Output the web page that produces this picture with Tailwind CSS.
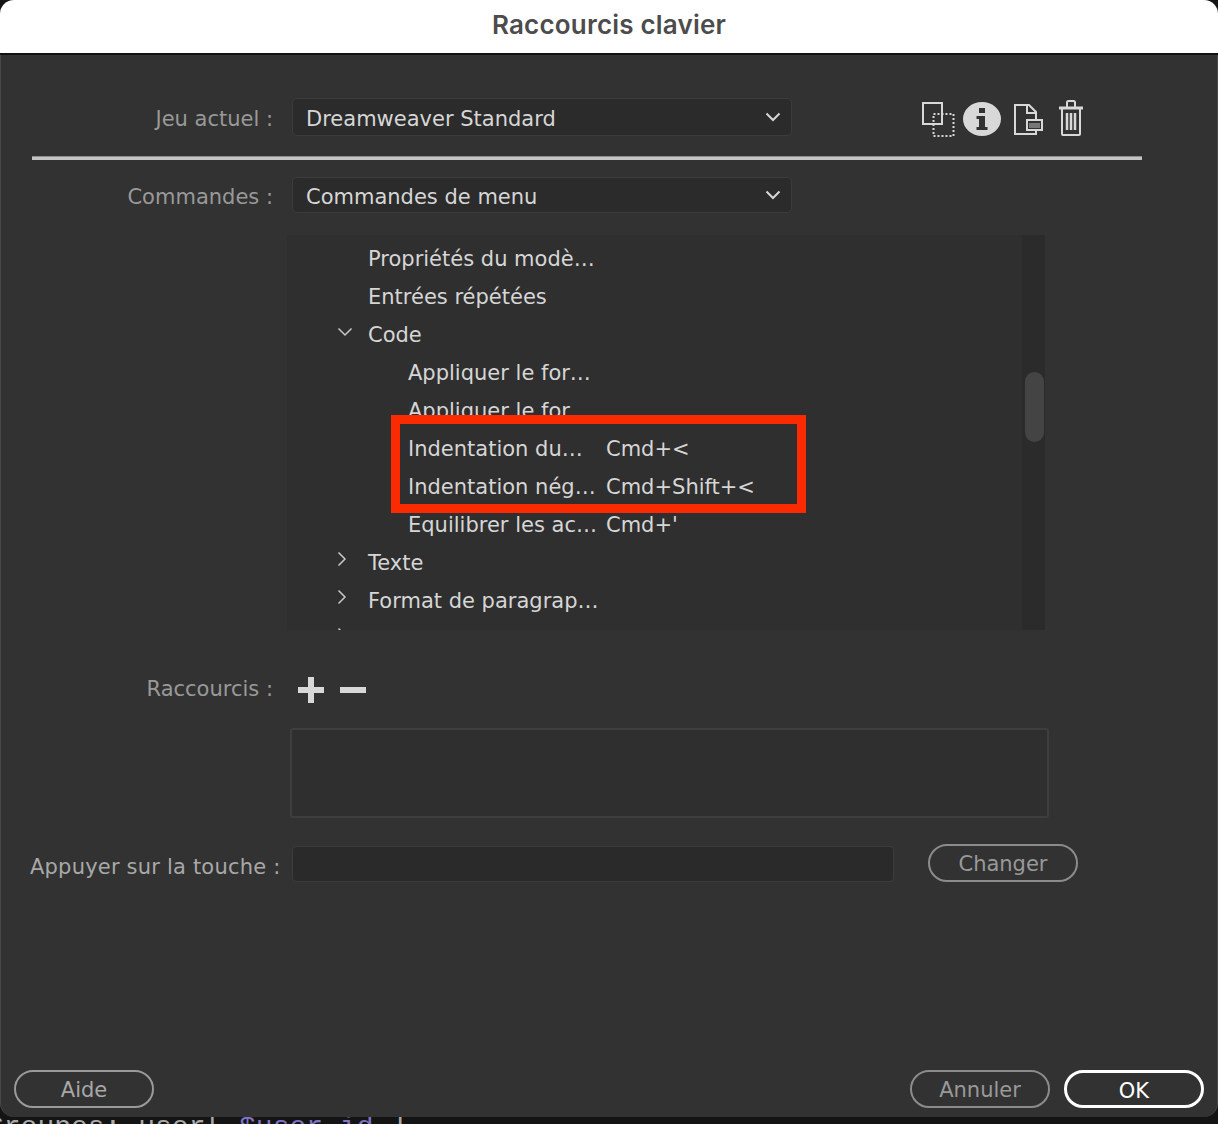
<!DOCTYPE html>
<html lang="fr">
<head>
    <meta charset="UTF-8">
    <title>Raccourcis clavier</title>
    <script src="https://cdn.jsdelivr.net/npm/@tailwindcss/browser@4"></script>
</head>
<body class="bg-[#141414] font-['DejaVu_Sans',sans-serif] text-[21px] text-[#d6d6d6] overflow-hidden">
<div class="w-[1218px] h-[1124px] flex flex-col overflow-hidden">
    <!-- Title bar -->
    <div class="h-[55px] shrink-0 bg-white rounded-t-[14px] border-b-2 border-[#111] flex items-center justify-center pb-[4px]">
        <h1 class="font-['Inter',sans-serif] font-semibold text-[26px] tracking-[0.2px] text-[#4c4c4c]">Raccourcis clavier</h1>
    </div>

    <!-- Dialog -->
    <div class="h-[1062px] shrink-0 bg-[#323232] rounded-b-[14px] border-l border-r border-[#484848] relative flex flex-col">
        <!-- Jeu actuel -->
        <div class="flex items-center mt-[43px] h-[38px]">
            <span class="w-[272px] text-right text-[#999] pt-[5px]">Jeu actuel :</span>
            <div class="ml-[19px] w-[500px] h-[38px] bg-[#2b2b2b] border border-[#3c3c3c] rounded-[5px] flex items-center justify-between pl-[13px] pr-[10px]">
                <span class="pt-[5px]">Dreamweaver Standard</span>
                <svg class="w-[16px] h-[10px]" viewBox="0 0 16 10" fill="none" stroke="#d6d6d6" stroke-width="2"><path d="M1.500 1.500 8 8l6.500-6.500"/></svg>
            </div>
            <div class="ml-[130px] flex items-start self-start">
                <svg class="w-[33px] h-[35px] mt-[4px]" viewBox="0 0 33 35" fill="none" stroke="#d8d8d8"><rect x="1" y="1" width="19" height="21" stroke-width="2"/><rect x="11.500" y="12" width="20" height="22" stroke-width="2" stroke-dasharray="2 2"/></svg>
                <svg class="w-[38px] h-[34px] ml-[8px] mt-[4px]" viewBox="0 0 38 34"><ellipse cx="19" cy="17" rx="19" ry="17" fill="#d8d8d8"/><path d="M16 6h6v5h-6zM13.500 14H22v11h2.500v3h-11v-3H16v-8h-2.500z" fill="#323232"/></svg>
                <svg class="w-[29px] h-[31px] ml-[13px] mt-[6px]" viewBox="0 0 29 31" fill="none" stroke="#d8d8d8" stroke-width="2"><path d="M22 16V8l-7-7H1v29h21v-4"/><path d="M13 1v8h9"/><rect x="13" y="16" width="15" height="10" fill="#323232"/><rect x="15" y="19" width="11" height="5" fill="#777" stroke="none"/></svg>
                <svg class="w-[24px] h-[36px] ml-[16px] mt-[2px]" viewBox="0 0 24 36" fill="none" stroke="#d8d8d8" stroke-width="2"><path d="M0 8h24" stroke-width="3"/><path d="M8 7V2.500a1.500 1.500 0 0 1 1.500-1.500h5A1.500 1.500 0 0 1 16 2.500V7"/><path d="M3 9v25a1 1 0 0 0 1 1h16a1 1 0 0 0 1-1V9"/><path d="M8 13v17M12 13v17M16 13v17" stroke-width="2.500"/></svg>
            </div>
        </div>

        <!-- Divider -->
        <div class="ml-[31px] w-[1110px] h-[4px] mt-[20px] bg-[#c4c4c4] border-t border-[#8e8e8e]"></div>

        <!-- Commandes -->
        <div class="flex items-center mt-[17px] h-[36px]">
            <span class="w-[272px] text-right text-[#999] pt-[5px]">Commandes :</span>
            <div class="ml-[19px] w-[500px] h-[36px] bg-[#2b2b2b] border border-[#3c3c3c] rounded-[5px] flex items-center justify-between pl-[13px] pr-[10px]">
                <span class="pt-[5px]">Commandes de menu</span>
                <svg class="w-[16px] h-[10px]" viewBox="0 0 16 10" fill="none" stroke="#d6d6d6" stroke-width="2"><path d="M1.500 1.500 8 8l6.500-6.500"/></svg>
            </div>
        </div>

        <!-- Command tree -->
        <div class="relative ml-[286px] mt-[22px] w-[758px] h-[395px] bg-[#2f2f2f] overflow-hidden pt-[4px] whitespace-nowrap">
            <div class="h-[38px] flex items-center pt-[4px] pl-[81px]">Propriétés du modè…</div>
            <div class="h-[38px] flex items-center pt-[4px] pl-[81px]">Entrées répétées</div>
            <div class="h-[38px] flex items-center pl-[50px]">
                <svg class="w-[16px] h-[10px] mb-[4px]" viewBox="0 0 16 10" fill="none" stroke="#c8c8c8" stroke-width="1.500"><path d="M1.500 1.500 8 8l6.500-6.500"/></svg>
                <span class="ml-[15px] pt-[4px]">Code</span>
            </div>
            <div class="h-[38px] flex items-center pt-[4px] pl-[121px]">Appliquer le for…</div>
            <div class="h-[38px] flex items-center pt-[4px] pl-[121px]">Appliquer le for…</div>
            <div class="h-[38px] flex items-center pt-[4px] pl-[121px]"><span class="w-[198px]">Indentation du…</span><span>Cmd+&lt;</span></div>
            <div class="h-[38px] flex items-center pt-[4px] pl-[121px]"><span class="w-[198px]">Indentation nég…</span><span>Cmd+Shift+&lt;</span></div>
            <div class="h-[38px] flex items-center pt-[4px] pl-[121px]"><span class="w-[198px]">Equilibrer les ac…</span><span>Cmd+'</span></div>
            <div class="h-[38px] flex items-center pl-[50px]">
                <svg class="w-[10px] h-[16px] mb-[6px]" viewBox="0 0 10 16" fill="none" stroke="#c8c8c8" stroke-width="1.500"><path d="M1.500 1.500 8 8l-6.500 6.500"/></svg>
                <span class="ml-[21px] pt-[4px]">Texte</span>
            </div>
            <div class="h-[38px] flex items-center pl-[50px]">
                <svg class="w-[10px] h-[16px] mb-[6px]" viewBox="0 0 10 16" fill="none" stroke="#c8c8c8" stroke-width="1.500"><path d="M1.500 1.500 8 8l-6.500 6.500"/></svg>
                <span class="ml-[21px] pt-[4px]">Format de paragrap…</span>
            </div>
            <div class="h-[38px] flex items-center pl-[50px]">
                <svg class="w-[10px] h-[16px] mb-[6px]" viewBox="0 0 10 16" fill="none" stroke="#c8c8c8" stroke-width="1.500"><path d="M1.500 1.500 8 8l-6.500 6.500"/></svg>
            </div>
            <!-- Scrollbar -->
            <div class="absolute top-0 right-0 w-[23px] h-full bg-[#2b2b2b]">
                <div class="absolute left-[3px] top-[137px] w-[19px] h-[70px] rounded-full bg-[#444]"></div>
            </div>
            <div class="absolute left-[104px] top-[180px] w-[415px] h-[98px] border-[9px] border-[#fb2a00]"></div>
        </div>

        <!-- Raccourcis -->
        <div class="flex items-center mt-[43px] h-[30px]">
            <span class="w-[272px] text-right text-[#999] pt-[4px]">Raccourcis :</span>
            <svg class="w-[26px] h-[26px] ml-[25px] mt-[3px]" viewBox="0 0 26 26" fill="#d8d8d8"><path d="M10 0h6v10h10v6H16v10h-6V16H0v-6h10z"/></svg>
            <div class="w-[26px] h-[6px] ml-[16px] mt-[3px] bg-[#d8d8d8]"></div>
        </div>

        <!-- Shortcut list -->
        <div class="ml-[289px] mt-[25px] w-[759px] h-[90px] bg-[#2f2f2f] border-2 border-[#3e3e3e] rounded-[3px]"></div>

        <!-- Key input -->
        <div class="flex items-center mt-[26px] h-[38px] whitespace-nowrap">
            <span class="ml-[29px] w-[250px] text-[#a8a8a8] tracking-[0.2px] pt-[10px]">Appuyer sur la touche :</span>
            <div class="ml-[12px] w-[602px] h-[36px] mt-[2px] bg-[#2a2a2a] border border-[#3c3c3c] rounded-[4px]"></div>
            <button class="ml-[34px] w-[150px] h-[38px] rounded-full border-2 border-[#8c8c8c] text-[#999] pt-[3px]">Changer</button>
        </div>

        <!-- Footer -->
        <div class="mt-auto mb-[9px] flex items-center justify-between px-[13px]">
            <button class="w-[140px] h-[38px] rounded-full border-2 border-[#9a9a9a] text-[#a8a8a8] pt-[3px]">Aide</button>
            <div class="flex gap-[14px]">
                <button class="w-[140px] h-[38px] rounded-full border-2 border-[#8c8c8c] text-[#999] pt-[3px]">Annuler</button>
                <button class="w-[140px] h-[38px] rounded-full border-[3px] border-white text-white pt-[3px]">OK</button>
            </div>
        </div>
    </div>

    <!-- Code editor behind the dialog -->
    <div class="h-[7px] overflow-hidden font-['Liberation_Mono',monospace] text-[28px] leading-[30px] text-[#aaa] whitespace-pre -ml-[13px]"><div class="-mt-[4px]">Groupes: user[ <span class="text-[#7f73c4]">$user_id</span> ] .</div></div>
</div>
</body>
</html>
